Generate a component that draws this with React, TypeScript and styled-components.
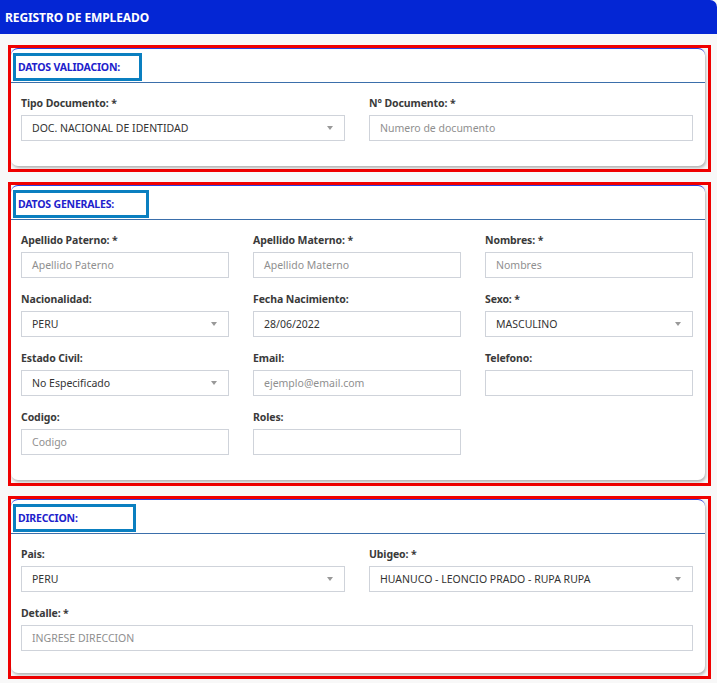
import React from "react";
import styled, { createGlobalStyle } from "styled-components";

const GlobalStyle = createGlobalStyle`
    body {
        margin: 0;
        background: #f8f8f8;
        font-family: "Noto Sans", "Open Sans", Arial, sans-serif;
    }
`;

const Page = styled.div`
    width: 717px;
    padding-bottom: 6px;
`;

const TopBar = styled.header`
    height: 34px;
    background: #0426d4;
    border-top-right-radius: 7px;
    display: flex;
    align-items: center;
    padding-left: 5px;
    color: #fff;
    font-size: 12px;
    font-weight: 700;
    letter-spacing: -0.1px;
`;

const Sections = styled.div`
    display: flex;
    flex-direction: column;
    gap: 10px;
    padding: 11px 6px 0 8px;
`;

const Frame = styled.section`
    border: 3px solid #f00000;
    padding: 0 3px 3px 0;
`;

const Card = styled.div<{ $pb: number }>`
    background: #fff;
    border-top: 1px solid #2a3ee0;
    border-radius: 7px;
    box-shadow: 1px 2px 3px rgba(0, 0, 0, 0.28);
    padding-bottom: ${(p) => p.$pb}px;
`;

const CardHead = styled.div`
    padding: 4px 0 1px 2px;
    border-bottom: 1px solid #3b6fab;
`;

const TitleBox = styled.div<{ $w: number }>`
    box-sizing: border-box;
    width: ${(p) => p.$w}px;
    height: 28px;
    border: 3px solid #0a7fc0;
    display: flex;
    align-items: center;
    padding-left: 2px;
    color: #2121cc;
    font-size: 10.5px;
    font-weight: 700;
    letter-spacing: -0.2px;
`;

const Grid = styled.div<{ $cols: number }>`
    display: grid;
    grid-template-columns: repeat(${(p) => p.$cols}, 1fr);
    column-gap: 24px;
    row-gap: 13px;
    padding: 12px 12px 0 10px;
`;

const Field = styled.div<{ $full?: boolean }>`
    display: flex;
    flex-direction: column;
    gap: 4px;
    grid-column: ${(p) => (p.$full ? "1 / -1" : "auto")};
`;

const Label = styled.label`
    height: 16px;
    line-height: 16px;
    font-size: 10.5px;
    font-weight: 700;
    color: #3a3a3a;
    letter-spacing: -0.1px;
`;

const Box = styled.div<{ $placeholder?: boolean }>`
    box-sizing: border-box;
    height: 26px;
    border: 1px solid #cfd3da;
    background: #fff;
    display: flex;
    align-items: center;
    justify-content: space-between;
    padding: 0 11px 0 10px;
    font-size: 10.5px;
    color: ${(p) => (p.$placeholder ? "#8f8f8f" : "#333")};
`;

const Caret = styled.span`
    width: 0;
    height: 0;
    border-left: 3px solid transparent;
    border-right: 3px solid transparent;
    border-top: 4px solid #999;
`;

type FieldProps = {
    label: string;
    value?: string;
    placeholder?: string;
    select?: boolean;
    full?: boolean;
};

function FormField({ label, value, placeholder, select, full }: FieldProps) {
    return (
        <Field $full={full}>
            <Label>{label}</Label>
            <Box $placeholder={!value}>
                <span>{value || placeholder}</span>
                {select && <Caret />}
            </Box>
        </Field>
    );
}

function Section({
    title,
    titleWidth,
    bottom = 25,
    children,
}: {
    title: string;
    titleWidth: number;
    bottom?: number;
    children: React.ReactNode;
}) {
    return (
        <Frame>
            <Card $pb={bottom}>
                <CardHead>
                    <TitleBox $w={titleWidth}>{title}</TitleBox>
                </CardHead>
                {children}
            </Card>
        </Frame>
    );
}

export default function App() {
    return (
        <Page>
            <GlobalStyle />
            <TopBar>REGISTRO DE EMPLEADO</TopBar>
            <Sections>
                <Section title="DATOS VALIDACION:" titleWidth={129}>
                    <Grid $cols={2}>
                        <FormField
                            label="Tipo Documento: *"
                            value="DOC. NACIONAL DE IDENTIDAD"
                            select
                        />
                        <FormField
                            label="N° Documento: *"
                            placeholder="Numero de documento"
                        />
                    </Grid>
                </Section>

                <Section title="DATOS GENERALES:" titleWidth={136}>
                    <Grid $cols={3}>
                        <FormField label="Apellido Paterno: *" placeholder="Apellido Paterno" />
                        <FormField label="Apellido Materno: *" placeholder="Apellido Materno" />
                        <FormField label="Nombres: *" placeholder="Nombres" />
                        <FormField label="Nacionalidad:" value="PERU" select />
                        <FormField label="Fecha Nacimiento:" value="28/06/2022" />
                        <FormField label="Sexo: *" value="MASCULINO" select />
                        <FormField label="Estado Civil:" value="No Especificado" select />
                        <FormField label="Email:" placeholder="ejemplo@email.com" />
                        <FormField label="Telefono:" placeholder="" />
                        <FormField label="Codigo:" placeholder="Codigo" />
                        <FormField label="Roles:" placeholder="" />
                    </Grid>
                </Section>

                <Section title="DIRECCION:" titleWidth={123} bottom={22}>
                    <Grid $cols={2}>
                        <FormField label="Pais:" value="PERU" select />
                        <FormField
                            label="Ubigeo: *"
                            value="HUANUCO - LEONCIO PRADO - RUPA RUPA"
                            select
                        />
                        <FormField
                            label="Detalle: *"
                            placeholder="INGRESE DIRECCION"
                            full
                        />
                    </Grid>
                </Section>
            </Sections>
        </Page>
    );
}
